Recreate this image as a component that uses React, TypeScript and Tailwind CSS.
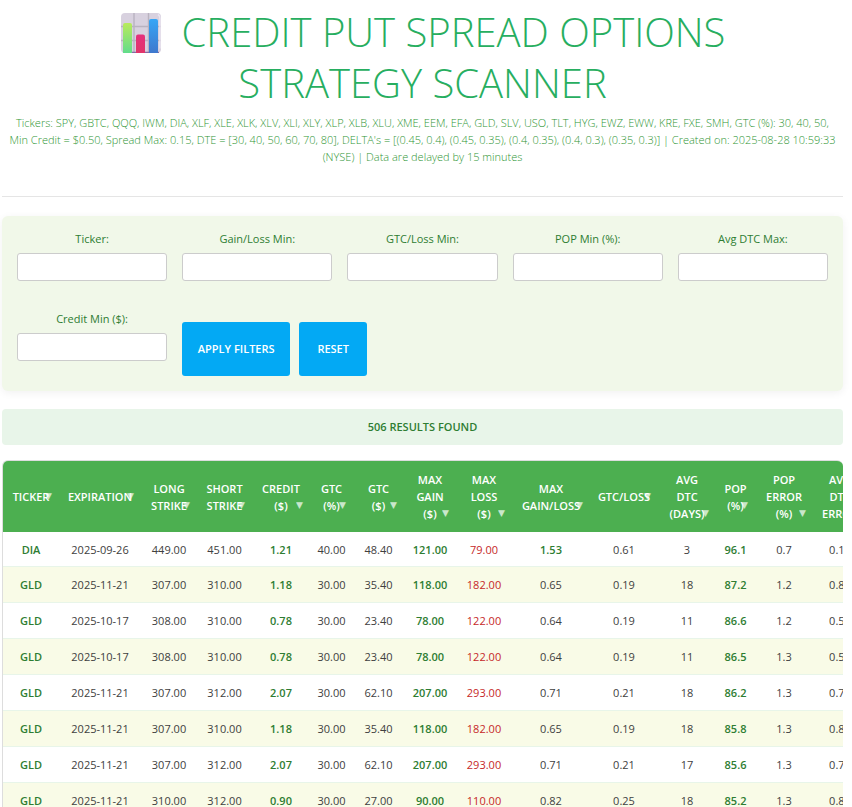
import { useState } from 'react';
import type { FormEvent } from 'react';

interface Spread {
  ticker: string;
  expiration: string;
  values: string[];
}

const columns = [
  { label: 'Ticker', width: 'w-[56px]' },
  { label: 'Expiration', width: 'w-[82px]' },
  { label: 'Long\nStrike', width: 'w-[56px]' },
  { label: 'Short\nStrike', width: 'w-[55px]' },
  { label: 'Credit\n($)', width: 'w-[58px]' },
  { label: 'GTC\n(%)', width: 'w-[43px]' },
  { label: 'GTC\n($)', width: 'w-[51px]' },
  { label: 'Max\nGain\n($)', width: 'w-[52px]' },
  { label: 'Max\nLoss\n($)', width: 'w-[56px]' },
  { label: 'Max\nGain/Loss', width: 'w-[78px]' },
  { label: 'GTC/Loss', width: 'w-[68px]' },
  { label: 'Avg\nDTC\n(Days)', width: 'w-[58px]' },
  { label: 'POP\n(%)', width: 'w-[39px]' },
  { label: 'POP\nError\n(%)', width: 'w-[58px]' },
  { label: 'Avg\nDTC\nError', width: 'w-[54px]' },
];

// long, short, credit, gtc %, gtc $, max gain, max loss, gain/loss, gtc/loss, avg dtc, pop, pop error, dtc error
const spreads: Spread[] = [
  { ticker: 'DIA', expiration: '2025-09-26', values: ['449.00', '451.00', '1.21', '40.00', '48.40', '121.00', '79.00', '1.53', '0.61', '3', '96.1', '0.7', '0.16'] },
  { ticker: 'GLD', expiration: '2025-11-21', values: ['307.00', '310.00', '1.18', '30.00', '35.40', '118.00', '182.00', '0.65', '0.19', '18', '87.2', '1.2', '0.81'] },
  { ticker: 'GLD', expiration: '2025-10-17', values: ['308.00', '310.00', '0.78', '30.00', '23.40', '78.00', '122.00', '0.64', '0.19', '11', '86.6', '1.2', '0.51'] },
  { ticker: 'GLD', expiration: '2025-10-17', values: ['308.00', '310.00', '0.78', '30.00', '23.40', '78.00', '122.00', '0.64', '0.19', '11', '86.5', '1.3', '0.51'] },
  { ticker: 'GLD', expiration: '2025-11-21', values: ['307.00', '312.00', '2.07', '30.00', '62.10', '207.00', '293.00', '0.71', '0.21', '18', '86.2', '1.3', '0.78'] },
  { ticker: 'GLD', expiration: '2025-11-21', values: ['307.00', '310.00', '1.18', '30.00', '35.40', '118.00', '182.00', '0.65', '0.19', '18', '85.8', '1.3', '0.81'] },
  { ticker: 'GLD', expiration: '2025-11-21', values: ['307.00', '312.00', '2.07', '30.00', '62.10', '207.00', '293.00', '0.71', '0.21', '17', '85.6', '1.3', '0.78'] },
  { ticker: 'GLD', expiration: '2025-11-21', values: ['310.00', '312.00', '0.90', '30.00', '27.00', '90.00', '110.00', '0.82', '0.25', '18', '85.2', '1.3', '0.81'] },
];

const filterFields = [
  { id: 'ticker', label: 'Ticker:' },
  { id: 'gainLoss', label: 'Gain/Loss Min:' },
  { id: 'gtcLoss', label: 'GTC/Loss Min:' },
  { id: 'pop', label: 'POP Min (%):' },
  { id: 'avgDtc', label: 'Avg DTC Max:' },
  { id: 'credit', label: 'Credit Min ($):' },
];

function valueClass(index: number, value: string) {
  // credit, max gain and pop are always highlighted
  if (index === 2 || index === 5 || index === 10) return 'font-semibold text-[#2e7d32]';
  if (index === 6) return 'text-[#c62828]';
  if (index === 7 && parseFloat(value) > 1) return 'font-semibold text-[#2e7d32]';
  return '';
}

function ChartIcon() {
  return (
    <svg viewBox="0 0 42 42" className="mr-5 inline-block size-[42px] align-[-7px]" aria-hidden="true">
      <defs>
        <linearGradient id="greenBar" x1="0" y1="0" x2="0" y2="1">
          <stop offset="0" stopColor="#b9ea5c" />
          <stop offset="1" stopColor="#62dc8c" />
        </linearGradient>
        <linearGradient id="pinkBar" x1="0" y1="0" x2="0" y2="1">
          <stop offset="0" stopColor="#e5307c" />
          <stop offset="1" stopColor="#e0356a" />
        </linearGradient>
        <linearGradient id="blueBar" x1="0" y1="0" x2="0" y2="1">
          <stop offset="0" stopColor="#36a6f6" />
          <stop offset="1" stopColor="#3f78cd" />
        </linearGradient>
      </defs>
      <rect x="1" y="1" width="40" height="40" rx="4" fill="#d8d1df" />
      <path d="M14 1v40M28.500 1v40M1 14.500h40M1 28.500h40" stroke="#b9b3c0" strokeWidth="1.400" />
      <path d="M38 2.500q2 1 2 4v30" stroke="#e9e4f0" strokeWidth="1.500" fill="none" />
      <path d="M3 40.300h36" stroke="#8a69a5" strokeWidth="1.200" />
      <path d="M3 41V13q0-2 2-2h5q2 0 2 2v28z" fill="url(#greenBar)" />
      <path d="M16 41V24.500q0-2 2-2h5q2 0 2 2V41z" fill="url(#pinkBar)" />
      <path d="M29 41V9q0-2 2-2h5q2 0 2 2v32z" fill="url(#blueBar)" />
    </svg>
  );
}

export default function App() {
  const [filters, setFilters] = useState<Record<string, string>>({});

  const handleSubmit = (e: FormEvent) => {
    e.preventDefault();
  };

  return (
    <div className="h-screen overflow-hidden bg-white pl-0.5 pr-[9px] font-['Open_Sans',sans-serif] text-[11px] leading-[17px] text-[#404040]">
      <header className="border-b border-[#e5e5e5] pb-[31px] pt-[6px] text-center">
        <h1 className="px-8 text-[40px] font-light uppercase leading-[51px] text-[#27ae60]">
          <ChartIcon />
          Credit Put Spread Options Strategy Scanner
        </h1>
        <p className="mt-[6px] px-1 font-light text-[#2f9635]">
          Tickers: SPY, GBTC, QQQ, IWM, DIA, XLF, XLE, XLK, XLV, XLI, XLY, XLP, XLB, XLU, XME, EEM, EFA, GLD, SLV, USO,
          TLT, HYG, EWZ, EWW, KRE, FXE, SMH, GTC (%): 30, 40, 50,
          <br />
          Min Credit = $0.50, Spread Max: 0.15, DTE = [30, 40, 50, 60, 70, 80], DELTA's = [(0.45, 0.4), (0.45, 0.35),
          (0.4, 0.35), (0.4, 0.3), (0.35, 0.3)] | Created on: 2025-08-28 10:59:33
          <br />
          (NYSE) | Data are delayed by 15 minutes
        </p>
      </header>

      <form
        onSubmit={handleSubmit}
        className="mt-[19px] grid grid-cols-5 gap-x-[15px] gap-y-[30px] rounded-md bg-[#f1f8e9] p-[15px] shadow-[0_2px_8px_rgba(0,0,0,0.06)]"
      >
        {filterFields.map((field) => (
          <div key={field.id} className="flex flex-col gap-1.5">
            <label htmlFor={field.id} className="text-center leading-4 text-[#2e7d32]">
              {field.label}
            </label>
            <input
              id={field.id}
              type="text"
              value={filters[field.id] || ''}
              onChange={(e) => setFilters({ ...filters, [field.id]: e.target.value })}
              className="h-7 w-full rounded-[3px] border border-[#ccc] bg-white px-2"
            />
          </div>
        ))}
        <div className="col-span-4 flex gap-[9px] pt-[11px]">
          <button type="submit" className="h-[54px] w-[108px] rounded-[3px] bg-[#03a9f4] pb-0.5 font-semibold text-white">
            APPLY FILTERS
          </button>
          <button
            type="button"
            onClick={() => setFilters({})}
            className="h-[54px] w-[68px] rounded-[3px] bg-[#03a9f4] pb-0.5 font-semibold text-white"
          >
            RESET
          </button>
        </div>
      </form>

      <div className="mt-[18px] rounded bg-[#e8f5e9] py-[9px] text-center font-semibold leading-[18px] text-[#2e7d32]">
        506 RESULTS FOUND
      </div>

      <div className="mt-[15px] overflow-hidden rounded-t-md border-l border-t border-[#ddd]">
        <table className="w-[864px] table-fixed border-separate border-spacing-0 text-center">
          <thead>
            <tr className="h-[71px] bg-[#4caf50] text-white">
              {columns.map((col) => (
                <th key={col.label} scope="col" className={`relative p-0 font-semibold ${col.width}`}>
                  <button type="button" className="whitespace-pre uppercase">
                    {col.label}
                    <span className="absolute right-[7px] font-['DejaVu_Sans',sans-serif] text-[9px] leading-4 opacity-70">▼</span>
                  </button>
                </th>
              ))}
            </tr>
          </thead>
          <tbody className="[&_td]:border-b [&_td]:border-[#e8f5e9]">
            {spreads.map((row, index) => (
              <tr key={index} className="h-9 first:h-[35px] even:bg-[#f9fbe7]">
                <td className="font-semibold text-[#2e7d32]">{row.ticker}</td>
                <td>{row.expiration}</td>
                {row.values.map((value, i) => (
                  <td key={i} className={valueClass(i, value)}>
                    {value}
                  </td>
                ))}
              </tr>
            ))}
          </tbody>
        </table>
      </div>
    </div>
  );
}
